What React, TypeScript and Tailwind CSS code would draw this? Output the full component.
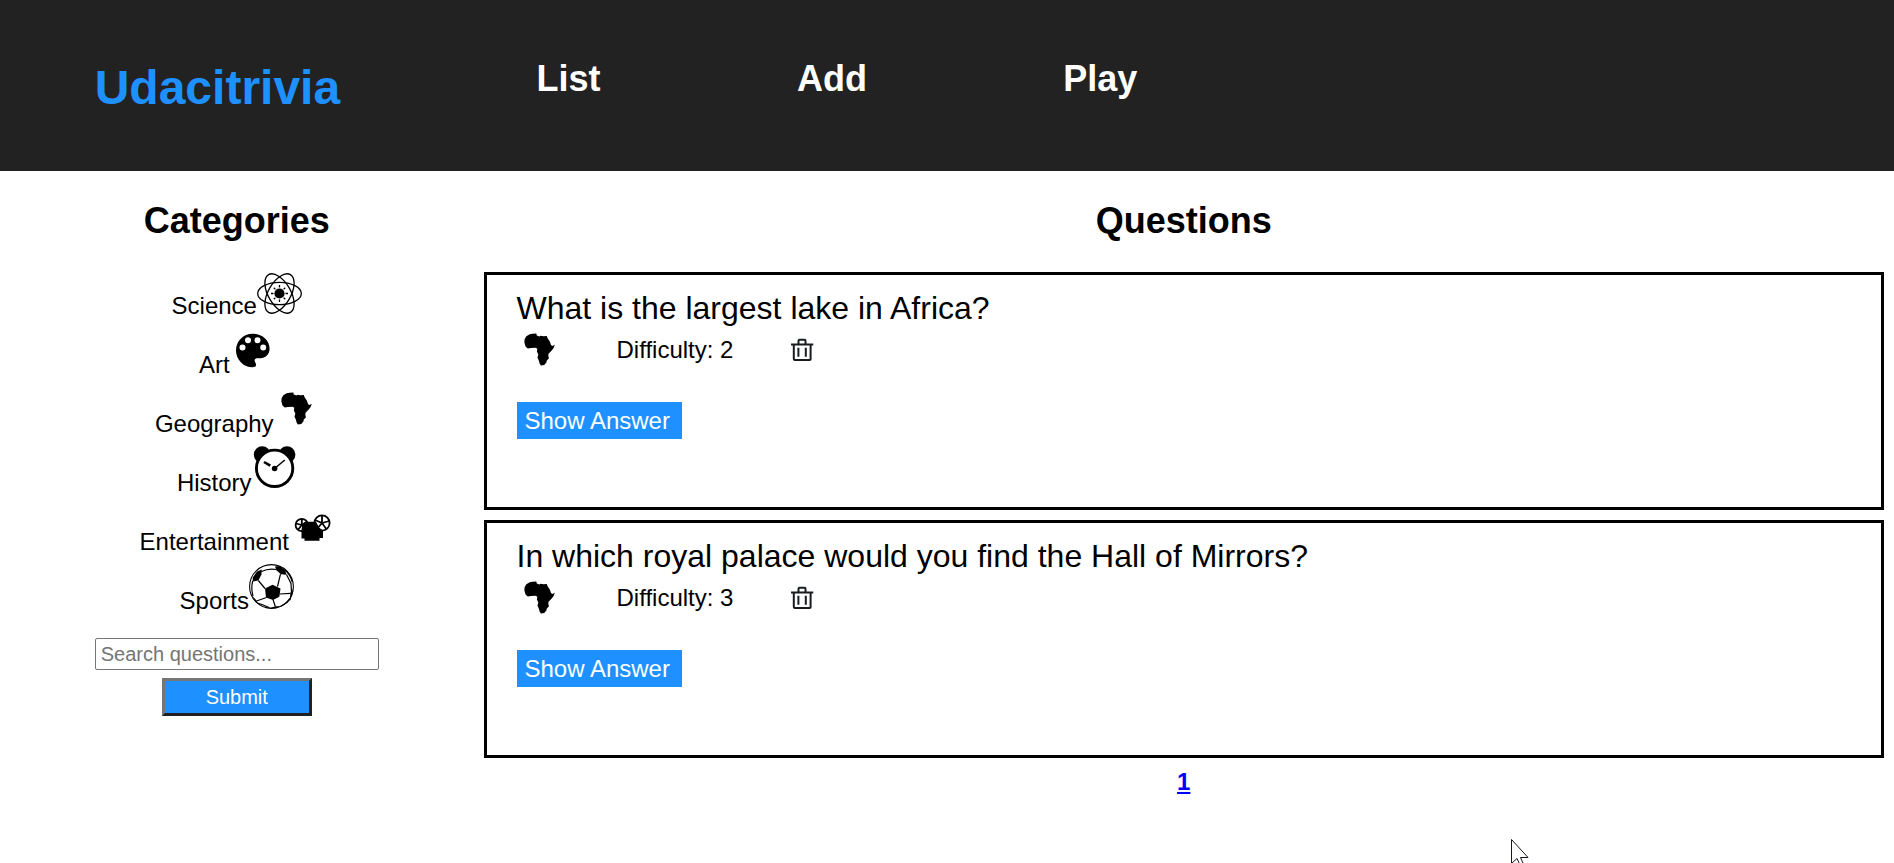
import type { ReactNode } from 'react';

type IconProps = { className?: string };

function ScienceIcon({ className = '' }: IconProps) {
  return (
    <svg viewBox="0 0 45 45" className={className} fill="none" stroke="black" strokeWidth="1.3" aria-hidden="true">
      <ellipse cx="22.5" cy="24.5" rx="21.8" ry="11.2" />
      <ellipse cx="22.5" cy="24.5" rx="21.8" ry="11.2" transform="rotate(60 22.5 24.5)" />
      <ellipse cx="22.5" cy="24.5" rx="21.8" ry="11.2" transform="rotate(-60 22.5 24.5)" />
      <circle cx="22.5" cy="24.5" r="5.1" fill="black" stroke="none" />
      <path d="M22.500 16v2.500M22.500 30.500V33M14 24.500h2.500M28.500 24.500H31M16.800 18.800l1.600 1.600M26.600 28.600l1.600 1.600M28.200 18.800l-1.600 1.600M18.400 28.600l-1.600 1.600" />
    </svg>
  );
}

function ArtIcon({ className = '' }: IconProps) {
  return (
    <svg viewBox="0 0 45 45" className={className} aria-hidden="true">
      <path
        fillRule="evenodd"
        d="M22.500 5.700C13.300 5.700 6 13.200 6 22.400S13.500 39.200 22.500 39.200c2.400 0 3.600-.8 3.500-2.800 0-1.700-1.400-2.300-1.400-4 0-1.400 1-2 2.300-2.200h3.500c5 0 9.200-4.200 9.200-9.300C39.600 12 32 5.700 22.500 5.700ZM12.500 16.600a3 3 0 1 1 0 6 3 3 0 0 1 0-6ZM18 9.200a3 3 0 1 1 0 6 3 3 0 0 1 0-6ZM27.500 9.200a3 3 0 1 1 0 6 3 3 0 0 1 0-6ZM33.200 16.600a3 3 0 1 1 0 6 3 3 0 0 1 0-6Z"
      />
    </svg>
  );
}

function GeographyIcon({ className = '' }: IconProps) {
  return (
    <svg viewBox="0 0 45 45" className={className} aria-hidden="true">
      <path d="M7.400 14.500 7.600 11.200 9.300 8.300 12.700 6.300 15.500 5.700 19.300 5.600 19.800 7.600 22.500 8.600 23.600 7.800 26.600 8.300 29.800 8 30.600 10.200 32.800 13.500 33.800 16.500 35 17.900 37.800 17 36.600 20 34.500 22.800 31.500 25.800 31.300 28 32 30.300 29.800 32.500 29.400 34.500 27.200 37 24 37.600 22.800 36 21.800 32.500 20.500 29.500 21.300 26.500 19.900 23.500 20.300 20.800 18.500 19.700 14 20 10.800 20.600 8.500 18.500Z" />
    </svg>
  );
}

function HistoryIcon({ className = '' }: IconProps) {
  return (
    <svg viewBox="0 0 45 45" className={className} aria-hidden="true">
      <circle cx="10.200" cy="8.600" r="8.400" />
      <circle cx="35" cy="8.600" r="8.400" />
      <circle cx="22.600" cy="22.300" r="18.200" fill="white" stroke="black" strokeWidth="2.900" />
      <circle cx="22.600" cy="22.500" r="2.800" />
      <path d="M22.600 22.500 32.800 14" stroke="black" strokeWidth="1.500" />
      <path d="m12 16 6.300 3.700" stroke="black" strokeWidth="2.600" />
    </svg>
  );
}

function EntertainmentIcon({ className = '' }: IconProps) {
  return (
    <svg viewBox="0 0 45 45" className={className} aria-hidden="true">
      <g fill="none" stroke="black" strokeWidth="1.800">
        <circle cx="12.800" cy="20" r="6.200" />
        <path d="M12.800 20V14M12.800 20l-6-1.500M12.800 20l-4 5M12.800 20l5-3" />
        <circle cx="33" cy="18" r="7.600" />
        <path d="M33 18v-7.500M33 18l7.200-2M33 18l4.500 6.300M33 18l-5 6M33 18l-7-3" />
      </g>
      <path d="M13.500 19 16 16.800H27L30 22.500 34 25.500V33H30.500V35.700H15.500V33.500H12.500V25Z" />
    </svg>
  );
}

function SportsIcon({ className = '' }: IconProps) {
  return (
    <svg viewBox="0 0 45 45" className={className} aria-hidden="true">
      <circle cx="22.500" cy="22.500" r="21.900" fill="white" stroke="black" strokeWidth="1.100" />
      <path d="M16 24.500 23.500 20.700 31.500 24.500 30.300 32.800 24 36 17 33.500Z" />
      <path d="M12.800 5.500 8 7.500 3.800 13.500 3.700 17.500 9.300 16.500 12.500 10.500Z" />
      <path d="M26 2.500 30.500 2 36 6 37.600 10.800 32 10.200 27.600 6.500Z" />
      <path d="M43.800 25 41.300 29 41 36.500 43.300 31ZM3.500 32 7.500 36.500 9.300 40.500 5.500 36.500ZM20 44.200 26.500 42.300 32.500 42.200 27 44.300Z" />
      <path
        d="M9.300 16.500 16 24.500M31.500 10.200 28.500 22.500M30.500 30 41.500 29.300M24 35.500 26.300 42.500M17.500 33.500 7.500 37M12.500 7.500Q19.500 4 27.500 5.500M3.700 17Q1.800 24.500 4 32M37.500 10.500 42 19.500 42.500 28M36 6Q41.500 11 43.300 18M8.500 39Q14 40.500 20.500 43.800M32 42.300 38 38.500 41.500 34.500"
        fill="none"
        stroke="black"
        strokeWidth="1.200"
      />
    </svg>
  );
}

function TrashIcon({ className = '' }: IconProps) {
  return (
    <svg viewBox="0 0 24 24" className={className} fill="none" stroke="#181c20" strokeWidth="2" aria-hidden="true">
      <path d="M1 6.500H23.300M8.500 6.500V2.700Q8.500 1.700 9.500 1.700H14.500Q15.500 1.700 15.500 2.700V6.500M3.800 6.500V21Q3.800 22 4.800 22H19.600Q20.600 22 20.600 21V6.500M8.400 9.700V18.700M15.800 9.700V18.700" />
    </svg>
  );
}

const categories: { name: string; icon: ReactNode }[] = [
  { name: 'Science', icon: <ScienceIcon className="size-[45px]" /> },
  { name: 'Art', icon: <ArtIcon className="size-[45px]" /> },
  { name: 'Geography', icon: <GeographyIcon className="size-[45px]" /> },
  { name: 'History', icon: <HistoryIcon className="size-[45px]" /> },
  { name: 'Entertainment', icon: <EntertainmentIcon className="size-[45px]" /> },
  { name: 'Sports', icon: <SportsIcon className="size-[45px]" /> },
];

const questions = [
  { text: 'What is the largest lake in Africa?', difficulty: 2 },
  { text: 'In which royal palace would you find the Hall of Mirrors?', difficulty: 3 },
];

function Header() {
  return (
    <header className="flex h-[171px] items-start gap-[7px] bg-[#222222] font-bold text-white">
      <h1 className="mx-[5%] mt-[61px] text-[48px] leading-[54px] text-[#1e90ff]">Udacitrivia</h1>
      <nav className="contents">
        {['List', 'Add', 'Play'].map((label) => (
          <a key={label} href="#" className="mx-[5%] mt-[59px] text-4xl leading-[40px]">
            {label}
          </a>
        ))}
      </nav>
    </header>
  );
}

function Question({ text, difficulty }: { text: string; difficulty: number }) {
  return (
    <article className="h-[238px] border-[3px] border-black px-[30px] pt-[14px]">
      <h3 className="text-[32px] leading-[38px]">{text}</h3>
      <div className="flex h-[46px] items-center">
        <GeographyIcon className="size-[45px]" />
        <span className="ml-[55px] leading-[28px]">Difficulty: {difficulty}</span>
        <button type="button" aria-label="Delete question" className="ml-[57px]">
          <TrashIcon className="size-6" />
        </button>
      </div>
      <button type="button" className="mt-[29px] h-[37px] bg-[#1e90ff] pr-3 pl-2 leading-[28px] text-white">
        Show Answer
      </button>
    </article>
  );
}

export default function App() {
  return (
    <div className="relative min-h-screen overflow-hidden bg-white font-['Liberation_Sans',Arial,sans-serif] text-2xl text-black">
      <Header />
      <main className="flex">
        <aside className="w-1/4 text-center">
          <h2 className="mt-[29px] text-4xl leading-[41px] font-bold">Categories</h2>
          <ul className="mt-[22px]">
            {categories.map(({ name, icon }) => (
              <li key={name} className="flex h-[59px] items-end justify-center">
                <button type="button" className="flex items-baseline">
                  {name}
                  {icon}
                </button>
              </li>
            ))}
          </ul>
          <form className="mt-[21px] flex flex-col items-center gap-2 text-xl" onSubmit={(e) => e.preventDefault()}>
            <input
              type="text"
              aria-label="Search questions"
              placeholder="Search questions..."
              className="h-[32px] w-[284px] rounded-[2px] border border-[#767676] px-[5px] placeholder:text-[#757575]"
            />
            <button
              type="submit"
              className="h-[38px] w-[150px] border-[3px] border-t-[#767676] border-r-[#212121] border-b-[#212121] border-l-[#767676] bg-[#1e90ff] leading-[24px] text-white"
            >
              Submit
            </button>
          </form>
        </aside>
        <section className="w-3/4 px-2.5">
          <h2 className="mt-[29px] text-center text-4xl leading-[41px] font-bold">Questions</h2>
          <div className="mt-[31px] flex flex-col gap-2.5">
            {questions.map((q) => (
              <Question key={q.text} {...q} />
            ))}
          </div>
          <div className="mt-[10px] text-center leading-[28px] font-bold">
            <a href="#" className="text-[#0000ff] underline">
              1
            </a>
          </div>
        </section>
      </main>
      <svg viewBox="0 0 20 30" className="absolute top-[839px] left-[1511px] h-[30px] w-[20px]" fill="white" stroke="#14141e" aria-hidden="true">
        <path d="M.5.500v24l5.500-5 4 8.500 3-1.500-3.500-8h7.500Z" />
      </svg>
    </div>
  );
}
